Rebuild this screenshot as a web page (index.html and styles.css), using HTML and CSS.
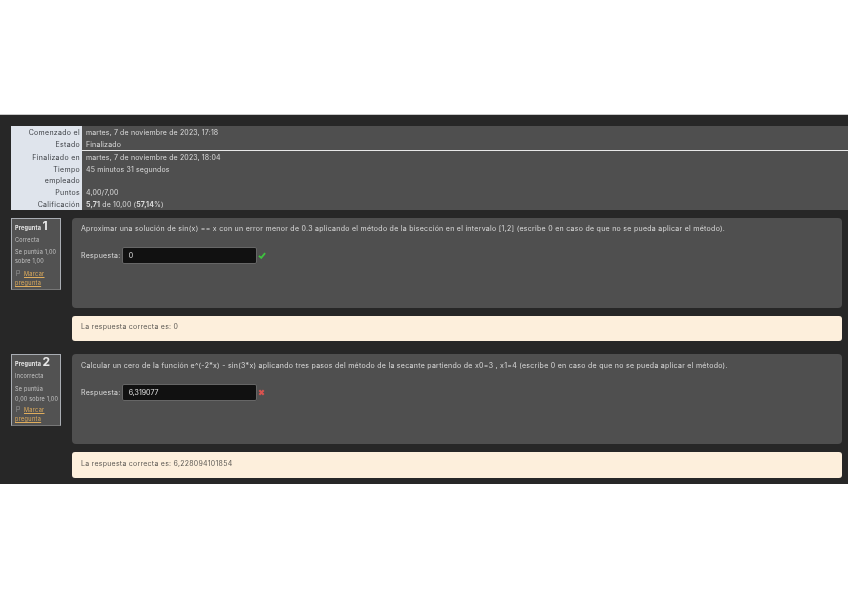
FILE: index.html
```html
<!DOCTYPE html>
<html lang="es">
<head>
    <meta charset="UTF-8">
    <meta name="viewport" content="width=device-width, initial-scale=1.0">
    <title>Revisión del intento</title>
    <link rel="stylesheet" href="styles.css">
</head>
<body>
    <div class="page">
        <table class="summary">
            <tr><th>Comenzado el</th><td>martes, 7 de noviembre de 2023, 17:18</td></tr>
            <tr class="row-end"><th>Estado</th><td>Finalizado</td></tr>
            <tr><th>Finalizado en</th><td>martes, 7 de noviembre de 2023, 18:04</td></tr>
            <tr><th>Tiempo empleado</th><td>45 minutos 31 segundos</td></tr>
            <tr><th>Puntos</th><td>4,00/7,00</td></tr>
            <tr><th>Calificación</th><td><b>5,71</b> de 10,00 (<b>57,14</b>%)</td></tr>
        </table>

        <div class="question">
            <div class="info">
                <h3>Pregunta <span>1</span></h3>
                <p>Correcta</p>
                <p>Se puntúa 1,00<br>sobre 1,00</p>
                <p class="flag"><svg class="flag-mark" width="4" height="6" viewBox="0 0 4 6"><path d="M.5 6V.5h3v3h-3" fill="none" stroke="#8a8a8a" stroke-width=".7"/></svg><a href="#">Marcar<br>pregunta</a></p>
            </div>
            <div class="content">
                <div class="formulation">
                    <p>Aproximar una solución de sin(x) == x con un error menor de 0.3 aplicando el método de la bisección en el intervalo [1,2] (escribe 0 en caso de que no se pueda aplicar el método).</p>
                    <div class="answer">
                        <label>Respuesta:</label>
                        <input type="text" value="0" readonly>
                        <svg class="mark" width="8" height="7" viewBox="0 0 10 9"><path d="M1 5l3 2.5L9 1.5" fill="none" stroke="#3fc13f" stroke-width="2.4"/></svg>
                    </div>
                </div>
                <div class="feedback">La respuesta correcta es: 0</div>
            </div>
        </div>

        <div class="question second">
            <div class="info">
                <h3>Pregunta <span>2</span></h3>
                <p>Incorrecta</p>
                <p class="wide-lines">Se puntúa<br>0,00 sobre 1,00</p>
                <p class="flag"><svg class="flag-mark" width="4" height="6" viewBox="0 0 4 6"><path d="M.5 6V.5h3v3h-3" fill="none" stroke="#8a8a8a" stroke-width=".7"/></svg><a href="#">Marcar<br>pregunta</a></p>
            </div>
            <div class="content">
                <div class="formulation">
                    <p>Calcular un cero de la función e^(-2*x) - sin(3*x) aplicando tres pasos del método de la secante partiendo de x0=3 , x1=4 (escribe 0 en caso de que no se pueda aplicar el método).</p>
                    <div class="answer">
                        <label>Respuesta:</label>
                        <input type="text" value="6,319077" readonly>
                        <svg class="mark" width="7" height="7" viewBox="0 0 8 8"><path d="M1.5 1.5l5 5M6.5 1.5l-5 5" fill="none" stroke="#d9534f" stroke-width="2.4"/></svg>
                    </div>
                </div>
                <div class="feedback">La respuesta correcta es: 6,228094101854</div>
            </div>
        </div>
    </div>
</body>
</html>
```

FILE: styles.css
```css
body {
    margin: 0;
    padding-top: 114px;
    background-color: #fff;
    font-family: "Inter", "Liberation Sans", sans-serif;
    font-size: 7px;
    color: #dadada;
}
.page {
    box-sizing: border-box;
    height: 370px;
    padding: 11px 6px 0 11px;
    background-color: #272727;
    border-top: 1px solid #c9c9c9;
    filter: blur(0.35px);
}
.summary {
    width: calc(100% + 6px);
    border-collapse: collapse;
    line-height: 11px;
    letter-spacing: 0.14px;
}
.summary th {
    width: 71px;
    box-sizing: border-box;
    padding: 1px 2px 0 12px;
    background-color: #dfe4ec;
    color: #3c3f44;
    font-weight: 400;
    text-align: right;
    vertical-align: top;
    letter-spacing: 0.3px;
}
.summary td {
    padding: 1px 0 0 4px;
    background-color: #4f4f4f;
    vertical-align: top;
}
.summary .row-end td {
    border-bottom: 1px solid #e8e8e8;
}
.question {
    display: flex;
    gap: 11px;
    margin-top: 8px;
}
.question.second {
    margin-top: 13px;
}
.info {
    box-sizing: border-box;
    flex: none;
    align-self: flex-start;
    width: 50px;
    height: 72px;
    padding: 3px 0 0 3px;
    background-color: #525252;
    border: 1px solid #a9adb3;
    border-bottom-color: #777;
    font-size: 5.5px;
    line-height: 9px;
    letter-spacing: 0.2px;
    color: #c4c4c4;
}
.info h3 {
    margin: 0 0 3px;
    padding-top: 2px;
    font-size: 5.5px;
    line-height: 9px;
    font-weight: 700;
    color: #e8e8e8;
}
.info h3 span {
    font-size: 12px;
    line-height: 0;
}
.info p {
    margin: 0 0 3px;
    white-space: nowrap;
}
.info .wide-lines {
    margin-bottom: 1px;
    line-height: 10px;
}
.info .flag {
    margin-top: 4px;
}
.second .info .flag {
    margin-top: 2px;
}
.info a {
    color: #e0ad5c;
    letter-spacing: 0.35px;
}
.flag-mark {
    margin: 0 4px 0 1px;
}
.content {
    flex: 1;
}
.formulation {
    box-sizing: border-box;
    height: 90px;
    padding: 6px 9px 0;
    background-color: #4f4f4f;
    border-radius: 4px;
    letter-spacing: 0.28px;
}
.second .formulation {
    padding-top: 7px;
}
.formulation p {
    margin: 0 0 13px;
    line-height: 10px;
    white-space: nowrap;
}
.answer {
    display: flex;
    align-items: center;
    gap: 1px;
    letter-spacing: 0.3px;
}
.answer input {
    box-sizing: border-box;
    width: 135px;
    height: 17px;
    padding: 0 6px;
    background-color: #111;
    border: 1px solid #666;
    border-radius: 2px;
    color: #e0e0e0;
    font-family: inherit;
    font-size: 7px;
}
.feedback {
    box-sizing: border-box;
    height: 25px;
    margin-top: 8px;
    padding: 0 9px;
    background-color: #fdefdc;
    border-radius: 3px;
    color: #5d5a55;
    line-height: 21px;
    letter-spacing: 0.25px;
}
.second .feedback {
    height: 26px;
    line-height: 23px;
}
```
